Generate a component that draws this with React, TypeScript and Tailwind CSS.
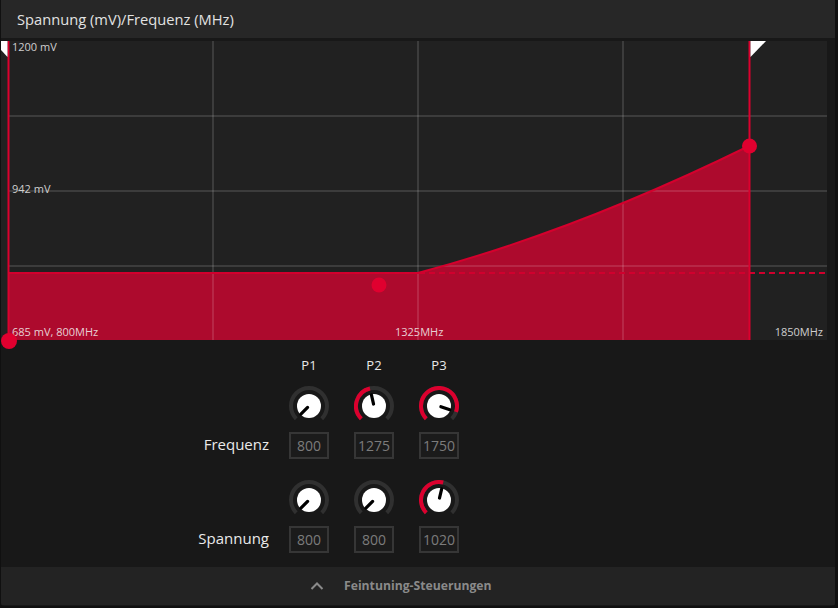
import React from "react";

const RED = "#dc002e";
const FONT = '"Open Sans", "DejaVu Sans", sans-serif';

function polar(a: number, r: number) {
  const rad = (a * Math.PI) / 180;
  return [20 + r * Math.sin(rad), 20 - r * Math.cos(rad)];
}

function arc(a0: number, a1: number, r: number) {
  const [x0, y0] = polar(a0, r);
  const [x1, y1] = polar(a1, r);
  const large = a1 - a0 > 180 ? 1 : 0;
  return `M ${x0} ${y0} A ${r} ${r} 0 ${large} 1 ${x1} ${y1}`;
}

function Knob({ value, min, max }: { value: number; min: number; max: number }) {
  const t = Math.max(0, Math.min(1, (value - min) / (max - min)));
  const a = -135 + t * 270;
  const [ix0, iy0] = polar(a, 2);
  const [ix1, iy1] = polar(a, 11.5);
  return (
    <svg width="40" height="40" viewBox="0 0 40 40" className="block">
      <path d={arc(-135, 135, 18)} fill="none" stroke="#303030" strokeWidth="4" />
      {t > 0.01 && <path d={arc(-135, a, 18)} fill="none" stroke={RED} strokeWidth="4" />}
      <circle cx="20" cy="20" r="12" fill="#ffffff" />
      <line x1={ix0} y1={iy0} x2={ix1} y2={iy1} stroke="#000" strokeWidth="3.2" strokeLinecap="round" />
    </svg>
  );
}

function ValueBox({ v }: { v: string }) {
  return (
    <div className="w-[40px] h-[27px] border-2 border-[#363636] bg-[#1b1b1b] flex items-center justify-center text-[14px] text-[#7c7c7c] leading-none">
      {v}
    </div>
  );
}

function Chart() {
  const W = 826;
  const H = 299;
  const flat = 232;
  const fill = `M 7.5 ${flat} H 417 Q 575 190 748 105 V ${H} H 7.5 Z`;
  const edge = `M 7.5 ${flat} H 417 Q 575 190 748 105`;
  const textStyle = { fontFamily: FONT, fontSize: 11 };
  return (
    <svg width={W} height={H} viewBox={`0 0 ${W} ${H}`} className="block overflow-visible">
      <rect x="0" y="0" width={W} height={H} fill="#212121" />
      <path d={fill} fill="#ad0a2d" />
      {[212, 417, 622].map((x) => (
        <line key={x} x1={x} y1="0" x2={x} y2={H} stroke="rgba(255,255,255,0.12)" strokeWidth="2" />
      ))}
      {[75, 150, 225].map((y) => (
        <line key={y} x1="8" y1={y} x2={W} y2={y} stroke="rgba(255,255,255,0.12)" strokeWidth="2" />
      ))}
      <path d={edge} fill="none" stroke="#d4002d" strokeWidth="2" />
      <line x1="8" y1={flat} x2={W} y2={flat} stroke="#d0002d" strokeWidth="2" strokeDasharray="6 4" />
      <line x1="7.5" y1="0" x2="7.5" y2={H} stroke={RED} strokeWidth="2" />
      <line x1="748.5" y1="0" x2="748.5" y2={H} stroke={RED} strokeWidth="2" />
      <polygon points="0,0 6.5,0 6.5,16 0,9" fill="#ffffff" />
      <polygon points="749.5,0 765,0 749.5,16" fill="#ffffff" />
      <text x="11" y="10" fill="#cfcfcf" style={textStyle}>1200 mV</text>
      <text x="11" y="152" fill="#cfcfcf" style={textStyle}>942 mV</text>
      <text x="11" y="295" fill="#e8d0d4" style={textStyle}>685 mV, 800MHz</text>
      <text x="394" y="295" fill="#e8d0d4" style={textStyle}>1325MHz</text>
      <text x="822" y="295" fill="#cfcfcf" textAnchor="end" style={textStyle}>1850MHz</text>
      <circle cx="8" cy="300" r="8" fill="#e0002f" />
      <circle cx="378" cy="244" r="7.5" fill="#e0002f" />
      <circle cx="748.5" cy="105" r="7.5" fill="#e0002f" />
    </svg>
  );
}

export default function App() {
  return (
    <div className="w-[838px] h-[608px] bg-[#101010] overflow-hidden" style={{ fontFamily: FONT }}>
      <div className="w-[834px] ml-[1px] h-[606px] bg-[#181818] flex flex-col rounded-b-[3px] overflow-hidden">
        <div className="h-[38px] bg-[#272727] flex items-center pl-[16px] text-[14.7px] text-[#e2e2e2]">
          Spannung (mV)/Frequenz (MHz)
        </div>
        <div className="mt-[3px]">
          <Chart />
        </div>
        <div className="flex-1 flex flex-col">
          <div className="flex mt-[16px]">
            <div className="w-[288px]" />
            <div className="flex gap-[25px]">
              {["P1", "P2", "P3"].map((p) => (
                <div key={p} className="w-[40px] h-[20px] flex items-center justify-center text-[13px] text-[#e8e8e8]">
                  {p}
                </div>
              ))}
            </div>
          </div>
          <div className="flex mt-[10px]">
            <div className="w-[288px]" />
            <div className="flex gap-[25px]">
              <Knob value={800} min={800} max={1850} />
              <Knob value={1275} min={800} max={1850} />
              <Knob value={1750} min={800} max={1850} />
            </div>
          </div>
          <div className="flex items-center mt-[6px]">
            <div className="w-[268px] text-right text-[15px] text-[#eaeaea] leading-none -mt-[3px]">Frequenz</div>
            <div className="w-[20px]" />
            <div className="flex gap-[25px]">
              <ValueBox v="800" />
              <ValueBox v="1275" />
              <ValueBox v="1750" />
            </div>
          </div>
          <div className="flex mt-[21px]">
            <div className="w-[288px]" />
            <div className="flex gap-[25px]">
              <Knob value={800} min={800} max={1200} />
              <Knob value={800} min={800} max={1200} />
              <Knob value={1020} min={800} max={1200} />
            </div>
          </div>
          <div className="flex items-center mt-[6px]">
            <div className="w-[268px] text-right text-[15px] text-[#eaeaea] leading-none -mt-[2px]">Spannung</div>
            <div className="w-[20px]" />
            <div className="flex gap-[25px]">
              <ValueBox v="800" />
              <ValueBox v="800" />
              <ValueBox v="1020" />
            </div>
          </div>
        </div>
        <div className="h-[38px] bg-[#232323] flex items-center pl-[309px] mb-[1px]">
          <svg width="14" height="10" viewBox="0 0 14 10" className="block">
            <path d="M 1.5 8 L 7 2.5 L 12.5 8" fill="none" stroke="#8a8a8a" strokeWidth="2" />
          </svg>
          <span className="ml-[20px] text-[12.2px] font-bold text-[#8a8a8a]">Feintuning-Steuerungen</span>
        </div>
      </div>
    </div>
  );
}
